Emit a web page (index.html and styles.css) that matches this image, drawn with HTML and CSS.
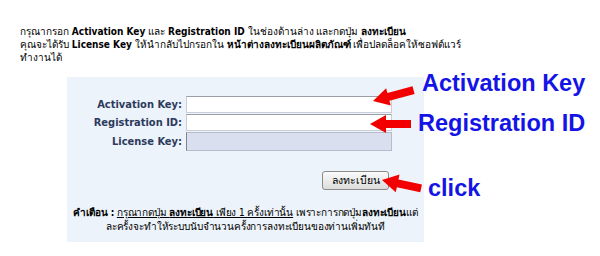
FILE: index.html
```html
<!DOCTYPE html>
<html lang="th">
<head>
    <meta charset="UTF-8">
    <title>ลงทะเบียนผลิตภัณฑ์</title>
    <link rel="stylesheet" href="styles.css">
</head>
<body>
    <p class="intro">
        กรุณากรอก <b>Activation Key</b> และ <b>Registration ID</b> ในช่องด้านล่าง และกดปุ่ม <b>ลงทะเบียน</b><br>
        คุณจะได้รับ <b>License Key</b> ให้นำกลับไปกรอกใน <b>หน้าต่างลงทะเบียนผลิตภัณฑ์</b> เพื่อปลดล็อคให้ซอฟต์แวร์<br>
        ทำงานได้
    </p>

    <div class="panel">
        <form class="form">
            <label for="actKey">Activation Key:</label>
            <input type="text" id="actKey">
            <label for="regId">Registration ID:</label>
            <input type="text" id="regId">
            <label for="licKey">License Key:</label>
            <input type="text" id="licKey" class="locked" readonly>
            <div class="actions">
                <button type="button">ลงทะเบียน</button>
            </div>
        </form>
        <p class="warning">
            <b>คำเตือน :</b> <u>กรุณากดปุ่ม <b>ลงทะเบียน</b> เพียง 1 ครั้งเท่านั้น</u> เพราะการกดปุ่ม<b>ลงทะเบียน</b>แต่<br>
            ละครั้งจะทำให้ระบบนับจำนวนครั้งการลงทะเบียนของท่านเพิ่มทันที
        </p>
    </div>

    <!-- annotations drawn over the screenshot -->
    <svg class="arrows" width="600" height="256" viewBox="0 0 600 256">
        <g fill="#f20000">
            <polygon transform="translate(373 101) rotate(-15)" points="0,0 16,-9 16,-4 42,-4 42,4 16,4 16,9"/>
            <polygon transform="translate(370 124)" points="0,0 16,-9 16,-4 41,-4 41,4 16,4 16,9"/>
            <polygon transform="translate(382 180) rotate(12)" points="0,0 16,-9 16,-4 40,-4 40,4 16,4 16,9"/>
        </g>
    </svg>
    <div class="note note-act">Activation Key</div>
    <div class="note note-reg">Registration ID</div>
    <div class="note note-click">click</div>
</body>
</html>
```

FILE: styles.css
```css
body {
    margin: 0;
    font-family: "DejaVu Sans Condensed", "DejaVu Sans", "Noto Sans", sans-serif;
    font-stretch: condensed;
    font-size: 10px;
    color: #000000;
    background: #ffffff;
    position: relative;
    width: 600px;
    height: 256px;
    overflow: hidden;
}
.intro {
    margin: 0;
    padding: 25px 0 0 20px;
    line-height: 13px;
    white-space: nowrap;
}
.panel {
    margin: 13px 0 0 67px;
    width: 357px;
    height: 165px;
    background: #edf3fa;
    box-sizing: border-box;
    padding-top: 19px;
}
.form {
    display: grid;
    grid-template-columns: 115px 206px;
    column-gap: 4px;
    row-gap: 1px;
    align-items: center;
}
.form label {
    text-align: right;
    font-weight: bold;
    font-size: 11px;
    color: #2c3a5c;
}
.form input {
    height: 17px;
    box-sizing: border-box;
    border: 1px solid #c9cdd6;
    border-top-color: #9a9ea8;
    background: #ffffff;
    margin: 0;
    padding: 0 3px;
}
.form input.locked {
    height: 19px;
    background: #dadff0;
    border-color: #b7bccb;
    border-left-color: #7d8190;
}
.actions {
    grid-column: 2;
    display: flex;
    justify-content: flex-end;
    padding: 19px 3px 0 0;
}
.actions button {
    height: 19px;
    width: 67px;
    font: inherit;
    font-size: 10.5px;
    color: #000;
    background: linear-gradient(#fafafa, #dcdcdc);
    border: 1px solid #8a8a8a;
    border-radius: 3px;
    padding: 0;
}
.warning {
    margin: 16px 0 0;
    text-align: center;
    line-height: 14px;
    letter-spacing: -0.15px;
    white-space: nowrap;
}
.arrows {
    position: absolute;
    left: 0;
    top: 0;
}
.note {
    position: absolute;
    font-family: "Liberation Sans", Arial, sans-serif;
    font-weight: bold;
    font-size: 23.5px;
    line-height: 1;
    color: #1414e6;
}
.note-act {
    left: 422px;
    top: 72px;
}
.note-reg {
    left: 418px;
    top: 112px;
}
.note-click {
    left: 428px;
    top: 177px;
}
```
